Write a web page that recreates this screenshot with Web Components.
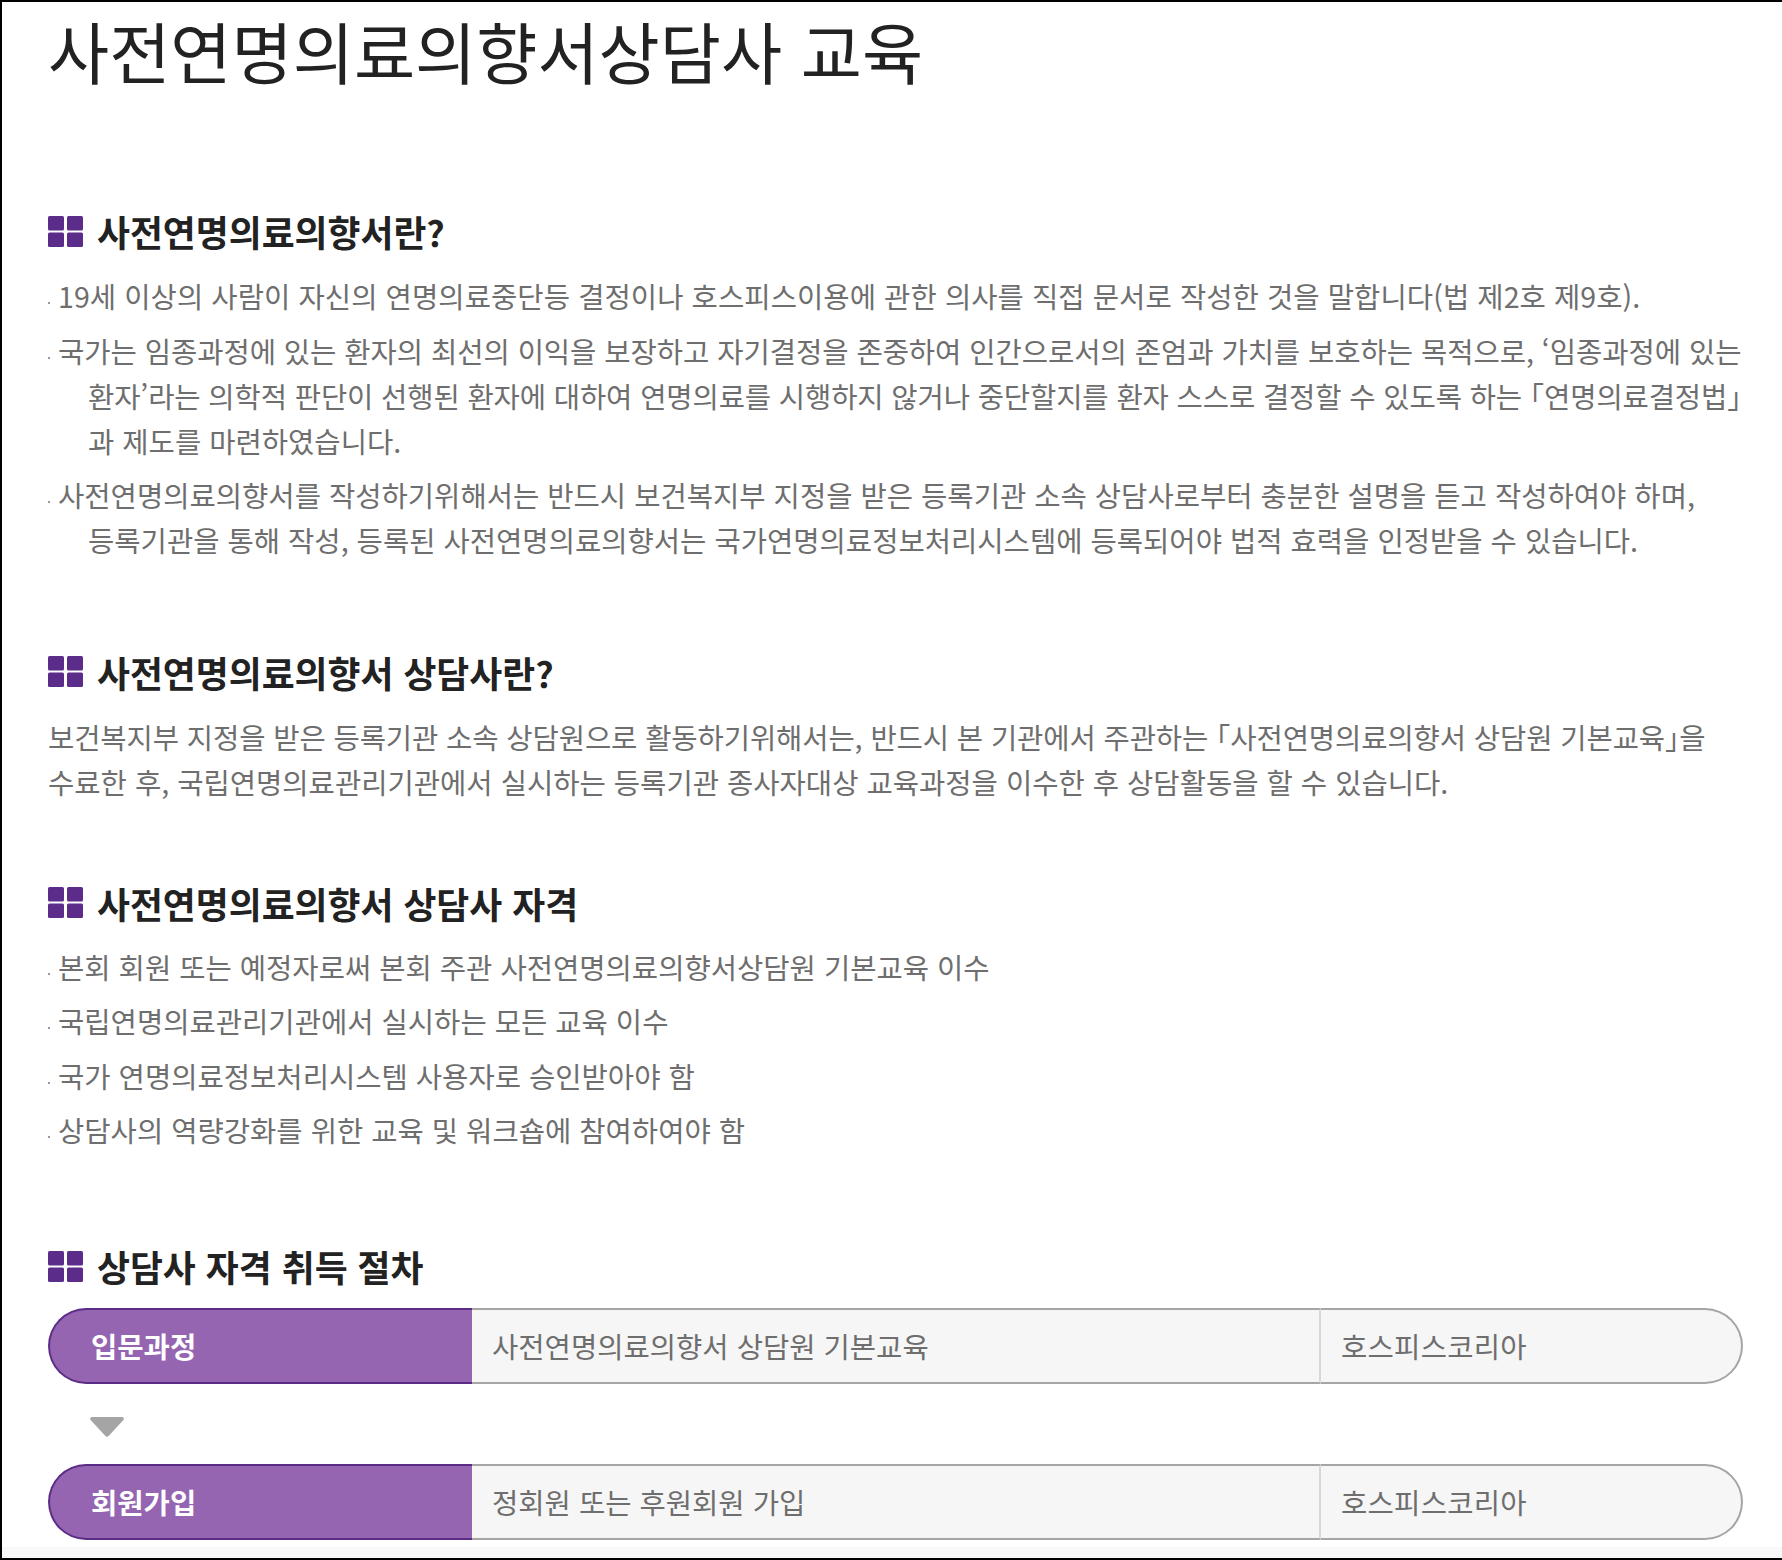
<!DOCTYPE html>
<html lang="ko">
<head>
<meta charset="utf-8">
<title>사전연명의료의향서상담사 교육</title>
<style>
  html, body { margin: 0; padding: 0; background: #fff; }
  body { font-family: "Noto Sans CJK KR", "Noto Sans", sans-serif; }
  .narrow { font-feature-settings: "halt"; }
</style>
</head>
<body>
<edu-page>
  <edu-title>사전연명의료의향서상담사 교육</edu-title>

  <edu-section heading="사전연명의료의향서란?" style="--top:112px">
    <edu-item><span style="letter-spacing:.06px">19세 이상의 사람이 자신의 연명의료중단등 결정이나 호스피스이용에 관한 의사를 직접 문서로 작성한 것을 말합니다(법 제2호 제9호).</span></edu-item>
    <edu-item><span style="letter-spacing:-.05px">국가는 임종과정에 있는 환자의 최선의 이익을 보장하고 자기결정을 존중하여 인간으로서의 존엄과 가치를 보호하는 목적으로, <span class="narrow">‘</span>임종과정에 있는</span><br><span style="letter-spacing:-.13px">환자<span class="narrow">’</span>라는 의학적 판단이 선행된 환자에 대하여 연명의료를 시행하지 않거나 중단할지를 환자 스스로 결정할 수 있도록 하는 <span class="narrow">「</span>연명의료결정법<span class="narrow">」</span></span><br>과 제도를 마련하였습니다.</edu-item>
    <edu-item>사전연명의료의향서를 작성하기위해서는 반드시 보건복지부 지정을 받은 등록기관 소속 상담사로부터 충분한 설명을 듣고 작성하여야 하며,<br>등록기관을 통해 작성, 등록된 사전연명의료의향서는 국가연명의료정보처리시스템에 등록되어야 법적 효력을 인정받을 수 있습니다.</edu-item>
  </edu-section>

  <edu-section heading="사전연명의료의향서 상담사란?" style="--top:88.5px">
    <edu-para><span style="letter-spacing:-.11px">보건복지부 지정을 받은 등록기관 소속 상담원으로 활동하기위해서는, 반드시 본 기관에서 주관하는 <span class="narrow">「</span>사전연명의료의향서 상담원 기본교육<span class="narrow">」</span>을</span><br>수료한 후, 국립연명의료관리기관에서 실시하는 등록기관 종사자대상 교육과정을 이수한 후 상담활동을 할 수 있습니다.</edu-para>
  </edu-section>

  <edu-section heading="사전연명의료의향서 상담사 자격" style="--top:78px;--gap:20px">
    <edu-item>본회 회원 또는 예정자로써 본회 주관 사전연명의료의향서상담원 기본교육 이수</edu-item>
    <edu-item>국립연명의료관리기관에서 실시하는 모든 교육 이수</edu-item>
    <edu-item>국가 연명의료정보처리시스템 사용자로 승인받아야 함</edu-item>
    <edu-item>상담사의 역량강화를 위한 교육 및 워크숍에 참여하여야 함</edu-item>
  </edu-section>

  <edu-section heading="상담사 자격 취득 절차" style="--top:93px">
    <edu-step label="입문과정" course="사전연명의료의향서 상담원 기본교육" org="호스피스코리아"></edu-step>
    <edu-arrow></edu-arrow>
    <edu-step label="회원가입" course="정회원 또는 후원회원 가입" org="호스피스코리아"></edu-step>
  </edu-section>
</edu-page>

<script>
  const define = (name, html, init) => {
    customElements.define(name, class extends HTMLElement {
      constructor() {
        super();
        this.attachShadow({ mode: "open" }).innerHTML = html;
      }
      connectedCallback() {
        if (init) init(this);
      }
    });
  };

  define("edu-page", `
    <style>
      :host {
        display: block;
        box-sizing: border-box;
        height: 1560px;
        overflow: hidden;
        padding: 0 39px 0 46px;
        border-top: 2px solid #000;
        border-left: 2px solid #000;
        border-bottom: 2px solid #000;
        background: linear-gradient(to top, #f9f9f9 11px, #fff 11px);
      }
    </style>
    <slot></slot>
  `);

  define("edu-title", `
    <style>
      :host {
        display: block;
        height: 96px;
        font-size: 66.5px;
        line-height: 96px;
        font-weight: 400;
        color: #222;
        white-space: nowrap;
      }
    </style>
    <slot></slot>
  `);

  define("edu-section", `
    <style>
      :host {
        display: block;
        margin-top: var(--top, 80px);
      }
      h2 {
        display: flex;
        align-items: center;
        gap: 14px;
        margin: 0 0 var(--gap, 21px);
        height: 42px;
        font-size: 35.8px;
        line-height: 42px;
        font-weight: 700;
        color: #222;
        white-space: nowrap;
      }
      svg { flex: none; display: block; }
    </style>
    <h2>
      <svg width="35" height="31" viewBox="0 0 35 31">
        <g fill="#5b2c8a">
          <rect x="0" y="0" width="16" height="14.5" rx="1.5"/>
          <rect x="19" y="0" width="16" height="14.5" rx="1.5"/>
          <rect x="0" y="16.5" width="16" height="14.5" rx="1.5"/>
          <rect x="19" y="16.5" width="16" height="14.5" rx="1.5"/>
        </g>
      </svg>
      <span id="text"></span>
    </h2>
    <slot></slot>
  `, (el) => {
    el.shadowRoot.getElementById("text").textContent = el.getAttribute("heading");
  });

  define("edu-item", `
    <style>
      :host {
        display: block;
        position: relative;
        padding-left: 40px;
        text-indent: -30px;
        margin-bottom: 9.5px;
        font-size: 28.58px;
        line-height: 45px;
        color: #6e6e6e;
        white-space: nowrap;
      }
      i {
        position: absolute;
        left: 0;
        top: 29px;
        width: 2px;
        height: 2px;
        background: #999;
      }
    </style>
    <i></i><slot></slot>
  `);

  define("edu-para", `
    <style>
      :host {
        display: block;
        font-size: 28.58px;
        line-height: 45px;
        color: #6e6e6e;
        white-space: nowrap;
      }
    </style>
    <slot></slot>
  `);

  define("edu-step", `
    <style>
      :host {
        display: flex;
        height: 76px;
        box-sizing: border-box;
        font-size: 28.58px;
        color: #6e6e6e;
        white-space: nowrap;
      }
      .label {
        flex: none;
        box-sizing: border-box;
        width: 424px;
        padding: 0 0 2px 41px;
        display: flex;
        align-items: center;
        background: #9565b2;
        border: 2px solid #5c2d86;
        border-right: 0;
        border-radius: 38px 0 0 38px;
        color: #fff;
        font-weight: 700;
      }
      .course, .org {
        box-sizing: border-box;
        display: flex;
        align-items: center;
        padding-bottom: 2px;
        background: #f6f6f6;
        border-top: 2px solid #a5a5a5;
        border-bottom: 2px solid #a5a5a5;
      }
      .course {
        flex: none;
        width: 849px;
        padding-left: 20px;
        border-right: 2px solid #d8d8d8;
      }
      .org {
        flex: 1;
        padding-left: 20px;
        letter-spacing: .25px;
        border-right: 2px solid #a5a5a5;
        border-radius: 0 38px 38px 0;
      }
    </style>
    <div class="label" id="label"></div>
    <div class="course" id="course"></div>
    <div class="org" id="org"></div>
  `, (el) => {
    for (const key of ["label", "course", "org"]) {
      el.shadowRoot.getElementById(key).textContent = el.getAttribute(key);
    }
  });

  define("edu-arrow", `
    <style>
      :host {
        display: block;
        height: 80px;
        padding: 33px 0 0 42px;
        box-sizing: border-box;
      }
      svg { display: block; }
    </style>
    <svg width="34" height="20" viewBox="0 0 34 20">
      <path d="M2 0H32C33.6 0 34.4 1.6 33.4 3L18.6 19C17.8 20 16.2 20 15.4 19L0.6 3C-0.4 1.6 0.4 0 2 0Z" fill="#a5a5a5"/>
    </svg>
  `);
</script>
</body>
</html>
